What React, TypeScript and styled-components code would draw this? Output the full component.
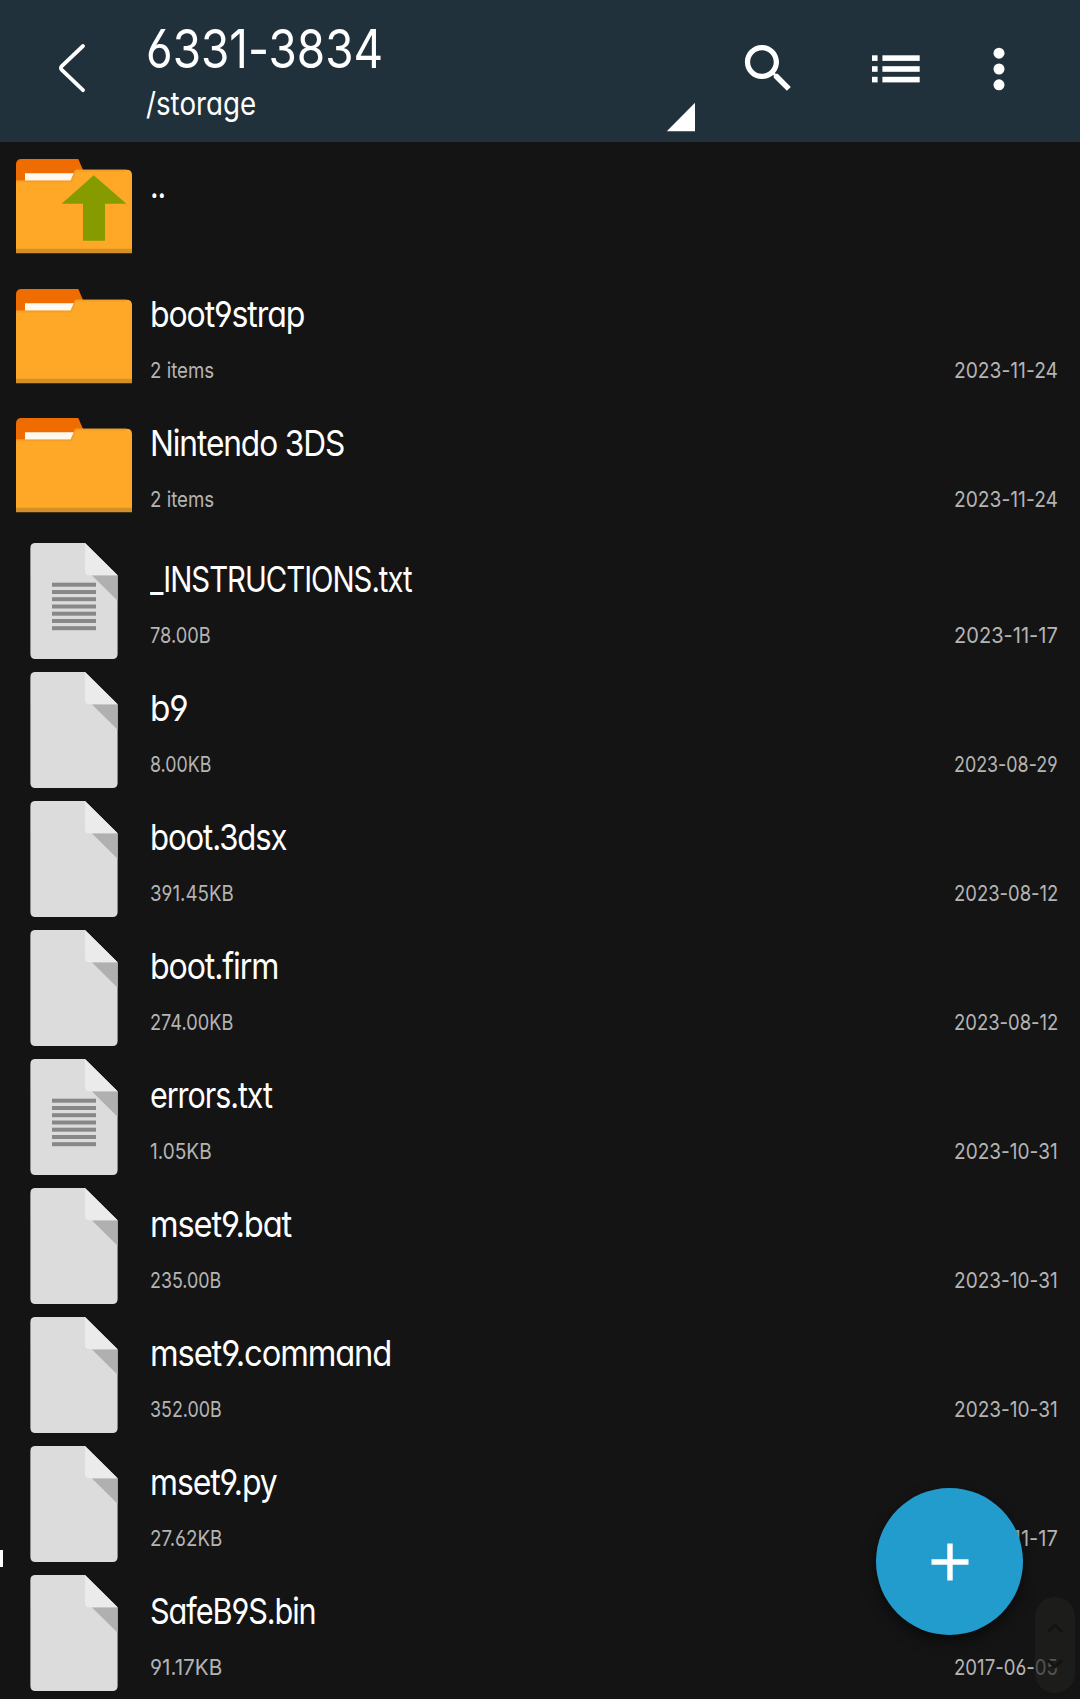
import React, { useLayoutEffect, useRef, useState } from "react";
import styled, { createGlobalStyle } from "styled-components";

const GlobalStyle = createGlobalStyle`
  * { box-sizing: border-box; }
  body {
    margin: 0;
    background: #141414;
    font-family: Inter, "Liberation Sans", sans-serif;
    font-feature-settings: "cv11", "cv03", "cv04", "calt" 0;
  }
`;

const Screen = styled.div`
  position: relative;
  width: 1080px;
  height: 1699px;
  overflow: hidden;
  background: #141414;
  color: #fff;
`;

const Header = styled.header`
  display: flex;
  align-items: center;
  height: 142px;
  background: #20313b;
`;

const BackButton = styled.button`
  display: flex;
  align-items: center;
  justify-content: center;
  width: 146px;
  height: 142px;
  padding: 0 2px 6px 0;
  border: 0;
  background: none;
`;

const PathPicker = styled.div`
  display: flex;
  justify-content: space-between;
  align-items: flex-end;
  width: 551px;
  height: 142px;
  padding-bottom: 10px;
`;

const PathText = styled.div`
  display: flex;
  flex-direction: column;
  gap: 10px;
  height: 132px;
  padding-top: 21px;
`;

const Actions = styled.div`
  display: flex;
  align-items: center;
  flex: 1;
  padding: 0 50px 5px 41px;
`;

const ActionButton = styled.button<{ $w: number; $gap?: number }>`
  display: flex;
  align-items: center;
  justify-content: center;
  width: ${(p) => p.$w}px;
  height: 63px;
  margin-left: ${(p) => p.$gap ?? 0}px;
  padding: 0;
  border: 0;
  background: none;
`;

const TextBox = styled.span<{
  $size: number;
  $line: number;
  $width: number;
  $color: string;
  $tracking: number;
}>`
  display: block;
  width: ${(p) => p.$width}px;
  height: ${(p) => p.$line}px;
  line-height: ${(p) => p.$line}px;
  font-size: ${(p) => p.$size}px;
  letter-spacing: ${(p) => p.$tracking}em;
  color: ${(p) => p.$color};
  white-space: nowrap;
`;

const TextRun = styled.span`
  display: inline-block;
  transform-origin: 0 50%;
`;

const List = styled.ul`
  margin: 0;
  padding: 0;
  list-style: none;
`;

const Row = styled.li<{ $firstFile: boolean }>`
  display: flex;
  height: 129px;
  margin-top: ${(p) => (p.$firstFile ? 7 : 0)}px;
  padding: 7px 22px 0 16px;
`;

const IconSlot = styled.div<{ $raised: boolean }>`
  width: 116px;
  height: 116px;
  margin-top: ${(p) => (p.$raised ? -1 : 0)}px;
  margin-right: 18px;
  svg { display: block; }
`;

const Info = styled.div`
  display: flex;
  flex: 1;
  flex-direction: column;
  gap: 19px;
  padding-top: 13px;
`;

const Meta = styled.div`
  display: flex;
  justify-content: space-between;
`;

const AddButton = styled.button`
  position: absolute;
  left: 876px;
  top: 1488px;
  display: flex;
  align-items: center;
  justify-content: center;
  width: 147px;
  height: 147px;
  padding: 0;
  border: 0;
  border-radius: 50%;
  background: #229bcd;
  box-shadow: 0 6px 14px rgba(0, 0, 0, 0.5);
`;

const ScrollPill = styled.div`
  position: absolute;
  left: 1035px;
  top: 1597px;
  display: flex;
  flex-direction: column;
  align-items: center;
  gap: 24px;
  width: 40px;
  height: 96px;
  padding-top: 26px;
  border-radius: 20px;
  background: rgba(34, 33, 30, 0.66);
`;

const EdgeMark = styled.div`
  position: absolute;
  left: 0;
  top: 1550px;
  width: 3px;
  height: 17px;
  background: #fff;
`;

type CondensedProps = {
  children: string;
  size: number;
  line: number;
  width: number;
  color?: string;
  tracking?: number;
};

/* Sets a run of text condensed horizontally so that it spans the given width. */
function Condensed({ children, size, line, width, color = "#fff", tracking = 0 }: CondensedProps) {
  const ref = useRef<HTMLSpanElement>(null);
  const [scale, setScale] = useState(1);
  useLayoutEffect(() => {
    if (ref.current) setScale(width / ref.current.offsetWidth);
  }, [children, width]);
  return (
    <TextBox $size={size} $line={line} $width={width} $color={color} $tracking={tracking}>
      <TextRun ref={ref} style={{ transform: `scaleX(${scale})` }}>{children}</TextRun>
    </TextBox>
  );
}

function FolderIcon({ up }: { up?: boolean }) {
  return (
    <svg width="116" height="116" viewBox="0 0 116 116">
      <path d="M0 36V16.5Q0 11 5.5 11H62.3L67.5 23V36Z" fill="#ef6c00" />
      <path d="M9 25.3H58V34H9Z" fill="#fffaf0" />
      <path d="M0 32.7H54.7L59 23Q59.5 21.7 61 21.7H110.5Q116 21.7 116 27V105H0Z" fill="#ffa828" />
      <path d="M0 33.6H55.2L59.8 22.7H110" fill="none" stroke="#f3a02a" strokeWidth="2" />
      <path d="M0 100.7H116V105.2H0Z" fill="#d48f27" />
      {up && <path d="M77.7 27.2L110.4 55.7H89V92.7H67V55.7H45.6Z" fill="#869b00" />}
    </svg>
  );
}

function FileIcon({ lines }: { lines?: boolean }) {
  return (
    <svg width="116" height="116" viewBox="0 0 116 116">
      <path d="M19.4 0H69L101.6 32.3V111Q101.6 116 96.6 116H19.4Q14.4 116 14.4 111V5Q14.4 0 19.4 0Z" fill="#dcdcdc" />
      <path d="M69 0L101.6 32.3H73.5Q69 32.3 69 28Z" fill="#ebebeb" />
      <path d="M76 32.6H101.6V57.8Z" fill="#b0b0b0" />
      {lines &&
        [41.7, 49, 56.2, 63.5, 70.7, 78, 85.2].map((y) => (
          <rect key={y} x="36" y={y - 2} width="44" height="4" fill="#888" />
        ))}
    </svg>
  );
}

type Entry = {
  kind: "up" | "folder" | "text" | "file";
  name: string;
  nameWidth: number;
  info?: string;
  infoWidth?: number;
  date?: string;
};

const entries: Entry[] = [
  { kind: "up", name: "..", nameWidth: 15 },
  { kind: "folder", name: "boot9strap", nameWidth: 154, info: "2 items", infoWidth: 64.5, date: "2023-11-24" },
  { kind: "folder", name: "Nintendo 3DS", nameWidth: 194.5, info: "2 items", infoWidth: 64.5, date: "2023-11-24" },
  { kind: "text", name: "_INSTRUCTIONS.txt", nameWidth: 262, info: "78.00B", infoWidth: 60.5, date: "2023-11-17" },
  { kind: "file", name: "b9", nameWidth: 37, info: "8.00KB", infoWidth: 61.5, date: "2023-08-29" },
  { kind: "file", name: "boot.3dsx", nameWidth: 136.5, info: "391.45KB", infoWidth: 83.5, date: "2023-08-12" },
  { kind: "file", name: "boot.firm", nameWidth: 128.5, info: "274.00KB", infoWidth: 83.5, date: "2023-08-12" },
  { kind: "text", name: "errors.txt", nameWidth: 122, info: "1.05KB", infoWidth: 61.5, date: "2023-10-31" },
  { kind: "file", name: "mset9.bat", nameWidth: 141.5, info: "235.00B", infoWidth: 71.5, date: "2023-10-31" },
  { kind: "file", name: "mset9.command", nameWidth: 241, info: "352.00B", infoWidth: 71.5, date: "2023-10-31" },
  { kind: "file", name: "mset9.py", nameWidth: 127, info: "27.62KB", infoWidth: 72.5, date: "2023-11-17" },
  { kind: "file", name: "SafeB9S.bin", nameWidth: 166, info: "91.17KB", infoWidth: 72.5, date: "2017-06-05" },
];

function EntryRow({ entry, firstFile }: { entry: Entry; firstFile: boolean }) {
  const isFolder = entry.kind === "up" || entry.kind === "folder";
  return (
    <Row $firstFile={firstFile}>
      <IconSlot $raised={entry.kind === "up"}>
        {isFolder ? <FolderIcon up={entry.kind === "up"} /> : <FileIcon lines={entry.kind === "text"} />}
      </IconSlot>
      <Info>
        <Condensed size={36} line={46} width={entry.nameWidth} tracking={-0.035}>{entry.name}</Condensed>
        {entry.info && entry.date && (
          <Meta>
            <Condensed size={22} line={28} width={entry.infoWidth ?? 0} color="#b4b4b4">{entry.info}</Condensed>
            <Condensed size={22} line={28} width={104} color="#b4b4b4">{entry.date}</Condensed>
          </Meta>
        )}
      </Info>
    </Row>
  );
}

function PillChevron({ down }: { down?: boolean }) {
  return (
    <svg width="18" height="11" viewBox="0 0 18 11">
      <path d={down ? "M2 2L9 9L16 2" : "M2 9L9 2L16 9"} fill="none" stroke="#131313" strokeWidth="2.6" />
    </svg>
  );
}

export default function App() {
  return (
    <Screen>
      <GlobalStyle />
      <Header>
        <BackButton aria-label="Back">
          <svg width="30" height="52" viewBox="0 0 30 52">
            <path d="M26 4L4.8 24.2Q3 26 4.8 27.8L26 48.2" fill="none" stroke="#fff" strokeWidth="3.8" strokeLinecap="round" />
          </svg>
        </BackButton>
        <PathPicker>
          <PathText>
            <Condensed size={53} line={56} width={237}>6331-3834</Condensed>
            <Condensed size={31.5} line={34} width={110}>/storage</Condensed>
          </PathText>
          <svg width="30" height="30" viewBox="0 0 30 30">
            <path d="M0.8 29.3L29 0.8V29.3Z" fill="#fff" />
          </svg>
        </PathPicker>
        <Actions>
          <ActionButton $w={63} aria-label="Search">
            <svg width="63" height="63" viewBox="0 0 24 24" fill="#fff">
              <path d="M15.5 14h-.79l-.28-.27C15.41 12.59 16 11.11 16 9.5 16 5.91 13.09 3 9.5 3S3 5.91 3 9.5 5.91 16 9.5 16c1.61 0 3.09-.59 4.23-1.57l.27.28v.79l5 4.99L20.49 19l-4.99-5zm-6 0C7.01 14 5 11.99 5 9.5S7.01 5 9.5 5 14 7.01 14 9.5 11.99 14 9.5 14z" />
            </svg>
          </ActionButton>
          <ActionButton $w={48} $gap={72} aria-label="View as list">
            <svg width="48" height="28" viewBox="0 0 48 28" fill="#fff">
              {[0.3, 11.2, 21.8].map((y) => (
                <React.Fragment key={y}>
                  <rect x="0" y={y} width="5.6" height="5.6" />
                  <rect x="10.4" y={y} width="37.3" height="5.6" />
                </React.Fragment>
              ))}
            </svg>
          </ActionButton>
          <ActionButton $w={63} $gap={47} aria-label="More">
            <svg width="12" height="44" viewBox="0 0 12 44" fill="#fff">
              <circle cx="6" cy="6.2" r="5.5" />
              <circle cx="6" cy="22" r="5.5" />
              <circle cx="6" cy="37.8" r="5.5" />
            </svg>
          </ActionButton>
        </Actions>
      </Header>
      <List>
        {entries.map((entry, i) => (
          <EntryRow key={entry.name} entry={entry} firstFile={i === 3} />
        ))}
      </List>
      <AddButton aria-label="Add">
        <svg width="38" height="38" viewBox="0 0 38 38">
          <path d="M19 0.5V37.5M0.5 19H37.5" stroke="#fff" strokeWidth="5.4" />
        </svg>
      </AddButton>
      <ScrollPill>
        <PillChevron />
        <PillChevron down />
      </ScrollPill>
      <EdgeMark />
    </Screen>
  );
}
